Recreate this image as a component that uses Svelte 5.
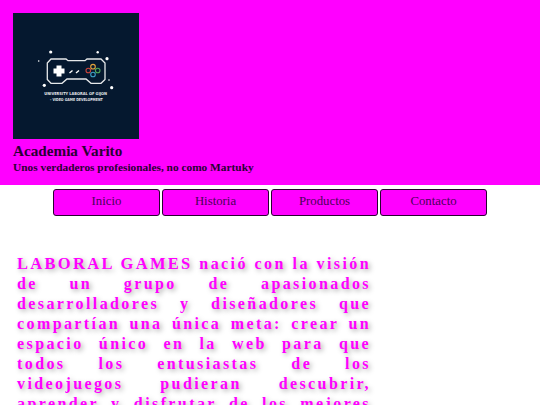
<script>
	const links = ['Inicio', 'Historia', 'Productos', 'Contacto'];
</script>

<header>
	<div class="logo">
		<svg viewBox="0 0 126 126" width="126" height="126">
			<rect width="126" height="126" fill="#05182f" />
			<g fill="#fff">
				<circle cx="37.700" cy="39" r="1.600" />
				<circle cx="84.700" cy="39.300" r="1.200" />
				<circle cx="94" cy="45.700" r="1.600" />
				<circle cx="25.700" cy="48" r="0.800" />
				<circle cx="96" cy="67" r="0.800" />
				<circle cx="31.300" cy="72.300" r="1.600" />
				<circle cx="98.700" cy="74.700" r="1.600" />
			</g>
			<path d="M38 46H53L55 47.700H72L74 46H88L92 50V66.500L88 70.300H78L73 66H54L49 70.300H38L34.300 66.500V50Z" fill="none" stroke="#e6e8ea" stroke-width="1.300" />
			<path d="M43.500 52.500h5v3h3v5h-3v3h-5v-3h-3v-5h3z" fill="#fff" />
			<path d="M56.500 60l3-2.500M63 60l3-2.500" stroke="#fff" stroke-width="1.400" />
			<circle cx="80" cy="53.700" r="2.300" fill="none" stroke="#e2a23c" stroke-width="1.100" />
			<circle cx="75.300" cy="57.500" r="2.300" fill="none" stroke="#c8443c" stroke-width="1.100" />
			<circle cx="84.700" cy="57.500" r="2.300" fill="none" stroke="#4fa65a" stroke-width="1.100" />
			<circle cx="80" cy="61.500" r="2.300" fill="none" stroke="#3f9fc4" stroke-width="1.100" />
			<text x="31.300" y="82" textLength="62.700" lengthAdjust="spacingAndGlyphs" class="tiny">UNIVERSITY LABORAL OF GIJON</text>
			<text x="37" y="88.400" textLength="52.700" lengthAdjust="spacingAndGlyphs" class="tiny">- VIDEO GAME DEVELOPMENT</text>
		</svg>
	</div>
	<h1>Academia Varito</h1>
	<h2>Unos verdaderos profesionales, no como Martuky</h2>
</header>

<nav>
	{#each links as link}
		<a href="#top">{link}</a>
	{/each}
</nav>

<main>
	<p>
		<strong>LABORAL GAMES</strong> nació con la visión de un grupo de apasionados desarrolladores y diseñadores que compartían una única meta: crear un espacio único en la web para que todos los entusiastas de los videojuegos pudieran descubrir, aprender y disfrutar de los mejores títulos.
	</p>
</main>

<style>
	:global(body) {
		background: #fff;
		font-family: "Liberation Serif", "Times New Roman", serif;
		overflow: hidden;
	}

	header {
		background: #f0f;
		height: 185px;
		padding: 13px 13px 0;
		box-sizing: border-box;
		color: #2a0033;
	}

	.logo {
		width: 126px;
		height: 126px;
	}

	.logo svg {
		display: block;
	}

	.tiny {
		font-family: "DejaVu Sans", sans-serif;
		font-size: 4px;
		font-weight: bold;
		fill: #e4e6ea;
	}

	h1 {
		margin: 3px 0 0;
		font-size: 15.200px;
		line-height: 18px;
	}

	h2 {
		margin: 0;
		font-size: 11.360px;
		line-height: 14px;
	}

	nav {
		display: flex;
		justify-content: center;
		gap: 2px;
		margin-top: 4px;
	}

	nav a {
		width: 107px;
		height: 27px;
		box-sizing: border-box;
		background: #f0f;
		border: 1px solid #2a0033;
		border-radius: 3px;
		color: #4a0058;
		text-decoration: none;
		font-size: 12.800px;
		line-height: 23px;
		text-align: center;
	}

	main {
		width: 354px;
		margin: 38px 0 0 17px;
	}

	p {
		margin: 0;
		color: #f0f;
		font-size: 16px;
		font-weight: bold;
		line-height: 20px;
		letter-spacing: 2.400px;
		text-align: justify;
		text-shadow: 2px 2px 5px rgba(0, 0, 0, 0.35);
	}

	strong {
		font-size: 16.500px;
		letter-spacing: 2.300px;
	}
</style>
